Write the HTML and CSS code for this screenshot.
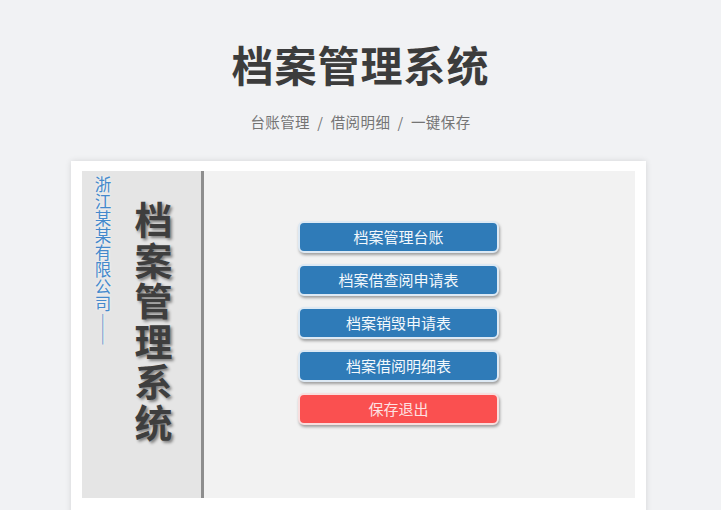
FILE: index.html
```html
<!DOCTYPE html>
<html lang="zh">
<head>
<meta charset="utf-8">
<title>档案管理系统</title>
<link rel="stylesheet" href="styles.css">
</head>
<body>
<header class="hero">
  <h1 class="title">档案管理系统</h1>
  <p class="subtitle">台账管理 &nbsp;/&nbsp; 借阅明细 &nbsp;/&nbsp; 一键保存</p>
</header>
<section class="card">
  <div class="panel">
    <aside class="side">
      <div class="company">浙江某某有限公司——</div>
      <div class="side-title">档案管理系统</div>
    </aside>
    <main class="menu">
      <button class="btn">档案管理台账</button>
      <button class="btn">档案借查阅申请表</button>
      <button class="btn">档案销毁申请表</button>
      <button class="btn">档案借阅明细表</button>
      <button class="btn btn-red">保存退出</button>
    </main>
  </div>
</section>
</body>
</html>
```
FILE: styles.css
```css
* { box-sizing: border-box; }
html, body { margin: 0; padding: 0; }
body {
  width: 721px;
  height: 510px;
  overflow: hidden;
  background: #f1f2f4;
  font-family: "Noto Sans CJK SC", "Noto Sans", sans-serif;
}
.hero {
  text-align: center;
  padding-top: 36px;
}
.title {
  margin: 0;
  font-size: 42px;
  line-height: 56px;
  font-weight: 700;
  color: #3c3c3c;
  letter-spacing: 1px;
}
.subtitle {
  margin: 20px 0 0;
  font-size: 14.5px;
  line-height: 20px;
  color: #747474;
  letter-spacing: 0.4px;
}
.card {
  margin: 29px 0 0 71px;
  width: 575px;
  height: 360px;
  background: #ffffff;
  padding: 10px 11px 11px 11px;
  box-shadow: 0 0 6px rgba(0, 0, 0, 0.12);
}
.panel {
  display: flex;
  height: 327px;
  background: #f2f2f2;
}
.side {
  width: 122px;
  background: #e5e5e5;
  border-right: 3px solid #8e8e8e;
  display: flex;
  padding: 5px 0 0 12px;
  gap: 23px;
}
.company {
  writing-mode: vertical-rl;
  font-size: 16.5px;
  line-height: 17px;
  color: #4489cc;
  letter-spacing: 0.6px;
  text-shadow: 0 0 3px rgba(255, 255, 255, 0.9);
  font-weight: 400;
}
.side-title {
  writing-mode: vertical-rl;
  margin-top: 25px;
  font-size: 38px;
  line-height: 38px;
  font-weight: 700;
  color: #3e3e3e;
  letter-spacing: 2.5px;
  text-shadow: 2px 2px 3px rgba(0, 0, 0, 0.45);
}
.menu {
  flex: 1;
  display: flex;
  flex-direction: column;
  align-items: flex-start;
  padding: 50px 0 0 94px;
  gap: 11px;
}
.btn {
  width: 201px;
  height: 32px;
  border: 2px solid #dde9f4;
  border-radius: 6px;
  background: #2f7bb8;
  color: #f3f8fc;
  font-family: "Noto Sans CJK SC", sans-serif;
  font-size: 15px;
  line-height: 26px;
  padding: 0;
  box-shadow: 1px 2px 3px rgba(0, 0, 0, 0.35);
}
.btn-red {
  background: #fa5050;
  border-color: #f8dede;
  color: #fde2e2;
}
```
